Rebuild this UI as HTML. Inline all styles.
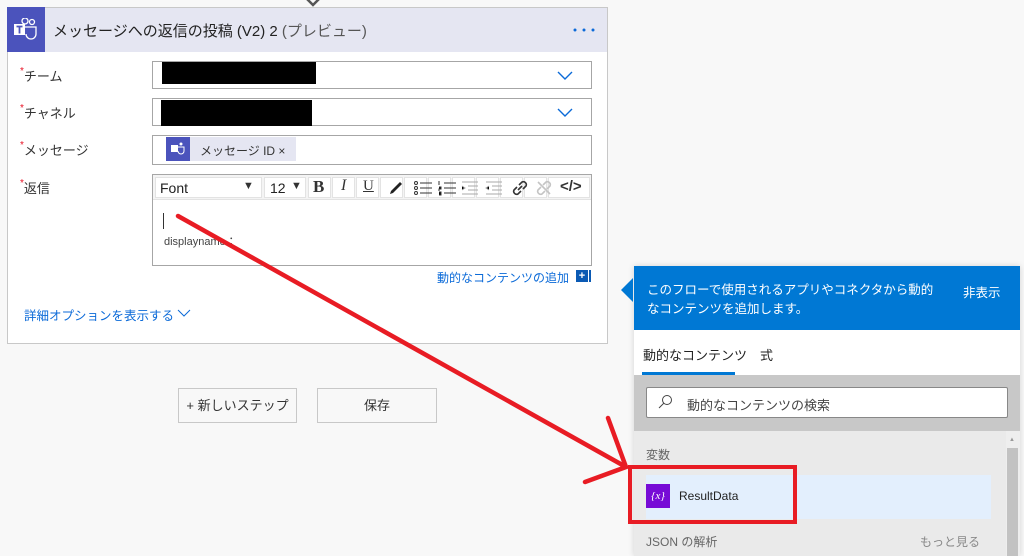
<!DOCTYPE html>
<html><head><meta charset="utf-8"><style>
*{box-sizing:border-box;margin:0;padding:0}
body{width:1024px;height:556px;overflow:hidden;background:#f8f8f8;font-family:"Liberation Sans","Noto Sans CJK JP",sans-serif;position:relative;color:#333}
.abs{position:absolute}
.card{left:7px;top:7px;width:601px;height:337px;background:#fff;border:1px solid #c8c8c8}
.hdr{left:7px;top:7px;width:601px;height:45px;background:#e5e6f2;border:1px solid #c8c8c8;border-bottom:none}
.lbl{font-size:13px;color:#333}
.lbl b{color:#e81123;font-weight:normal;font-size:10px;vertical-align:top}
.inp{border:1px solid #a6a6a6;background:#fff}
.blk{background:#000}
.tb{font-size:14px;color:#222}
.btn{position:absolute;top:177px;height:21px;border:1px solid #e3e3e3;background:#fff}
</style></head><body>
<svg class="abs" style="left:304px;top:0" width="18" height="8"><path d="M2 -2l7 7 7-7" fill="none" stroke="#555" stroke-width="2.5"/></svg>
<div class="abs card"></div>
<div class="abs hdr"></div>
<div class="abs" style="left:7px;top:7px;width:38px;height:45px;background:#4b53bc"></div>
<svg class="abs" style="left:12px;top:18px" width="28" height="24" viewBox="0 0 28 24"><circle cx="20" cy="4" r="2.5" fill="none" stroke="#fff" stroke-width="1.3"/><circle cx="13" cy="3" r="3" fill="none" stroke="#fff" stroke-width="1.3"/><path d="M10 9h14v7a5 5 0 0 1-10 0" fill="none" stroke="#fff" stroke-width="1.3"/><rect x="2" y="6" width="11" height="11" fill="#fff"/><path d="M4.5 8.5h6M7.5 8.5v7" stroke="#4b53bc" stroke-width="1.8"/></svg>
<div class="abs" style="left:53px;top:20px;font-size:15px;color:#222">メッセージへの返信の投稿 (V2) 2 <span style="color:#555">(プレビュー)</span></div>
<svg class="abs" style="left:572px;top:27px" width="24" height="6"><circle cx="3" cy="3" r="1.5" fill="#0b6ad8"/><circle cx="12" cy="3" r="1.5" fill="#0b6ad8"/><circle cx="21" cy="3" r="1.5" fill="#0b6ad8"/></svg>

<div class="abs lbl" style="left:20px;top:66px"><b>*</b>チーム</div>
<div class="abs inp" style="left:152px;top:61px;width:440px;height:28px"></div>
<div class="abs blk" style="left:162px;top:62px;width:154px;height:22px"></div>
<svg class="abs" style="left:557px;top:71px" width="16" height="10"><path d="M1 1l7 7 7-7" fill="none" stroke="#0b6ad8" stroke-width="1.4"/></svg>

<div class="abs lbl" style="left:20px;top:103px"><b>*</b>チャネル</div>
<div class="abs inp" style="left:152px;top:98px;width:440px;height:28px"></div>
<div class="abs blk" style="left:161px;top:100px;width:151px;height:26px"></div>
<svg class="abs" style="left:557px;top:108px" width="16" height="10"><path d="M1 1l7 7 7-7" fill="none" stroke="#0b6ad8" stroke-width="1.4"/></svg>

<div class="abs lbl" style="left:20px;top:140px"><b>*</b>メッセージ</div>
<div class="abs inp" style="left:152px;top:135px;width:440px;height:30px"></div>
<div class="abs" style="left:166px;top:137px;width:130px;height:24px;background:#e5e6f2"></div>
<div class="abs" style="left:166px;top:137px;width:24px;height:24px;background:#4b53bc"></div>
<svg class="abs" style="left:170px;top:142px" width="16" height="14"><rect x="1" y="3" width="7" height="7" fill="#fff"/><path d="M8 5h6v4a3 3 0 0 1-6 0" fill="none" stroke="#fff"/><circle cx="11" cy="2" r="1.5" fill="#fff"/></svg>
<div class="abs" style="left:200px;top:142px;font-size:12px;color:#333">メッセージ ID ×</div>

<div class="abs lbl" style="left:20px;top:178px"><b>*</b>返信</div>
<div class="abs inp" style="left:152px;top:174px;width:440px;height:92px"></div>
<div class="abs" style="left:153px;top:175px;width:438px;height:25px;background:#f4f4f4;border-bottom:1px solid #e3e3e3"></div>
<div class="btn" style="left:155px;width:107px"></div>
<div class="btn" style="left:264px;width:42px"></div>
<div class="btn" style="left:308px;width:23px"></div>
<div class="btn" style="left:332px;width:23px"></div>
<div class="btn" style="left:356px;width:23px"></div>
<div class="btn" style="left:380px;width:23px"></div>
<div class="btn" style="left:404px;width:23px"></div>
<div class="btn" style="left:428px;width:23px"></div>
<div class="btn" style="left:452px;width:23px"></div>
<div class="btn" style="left:476px;width:23px"></div>
<div class="btn" style="left:500px;width:23px"></div>
<div class="btn" style="left:524px;width:23px"></div>
<div class="btn" style="left:548px;width:42px"></div>
<div class="abs tb" style="left:160px;top:180px">Font</div>
<div class="abs" style="left:243px;top:180px;font-size:11px">▼</div>
<div class="abs tb" style="left:270px;top:180px">12</div>
<div class="abs" style="left:291px;top:180px;font-size:11px">▼</div>
<div class="abs" style="left:313px;top:177px;font:bold 17px 'Liberation Serif',serif">B</div>
<div class="abs" style="left:341px;top:177px;font:italic 16px 'Liberation Serif',serif">I</div>
<div class="abs" style="left:363px;top:178px;font:15px 'Liberation Serif',serif;text-decoration:underline">U</div>
<svg class="abs" style="left:388px;top:180px" width="16" height="16"><path d="M2 14l3-1 9-9-2-2-9 9z" fill="#222"/></svg>
<svg class="abs" style="left:413px;top:180px" width="20" height="16" stroke="#333"><path d="M7 3h12M7 8h12M7 13h12"/><circle cx="3" cy="3" r="1.5" fill="none"/><circle cx="3" cy="8" r="1.5" fill="none"/><circle cx="3" cy="13" r="1.5" fill="none"/></svg>
<svg class="abs" style="left:437px;top:180px" width="20" height="16" stroke="#333"><path d="M7 3h12M7 8h12M7 13h12M2 1v4M2 7h2v2H2v2M2 12h2v3H2"/></svg>
<svg class="abs" style="left:461px;top:180px" width="18" height="16" stroke="#aaa"><path d="M1 2h16M7 6h10M7 10h10M1 14h16M1 6l3 2-3 2"/></svg>
<svg class="abs" style="left:485px;top:180px" width="18" height="16" stroke="#aaa"><path d="M1 2h16M7 6h10M7 10h10M1 14h16M4 6l-3 2 3 2"/></svg>
<svg class="abs" style="left:511px;top:179px" width="18" height="18" fill="none" stroke="#333" stroke-width="1.6"><path d="M8 6l3-3a3 3 0 0 1 4 4l-3 3M10 12l-3 3a3 3 0 0 1-4-4l3-3M7 11l4-4"/></svg>
<svg class="abs" style="left:535px;top:179px" width="18" height="18" fill="none" stroke="#c4c4c4" stroke-width="1.6"><path d="M8 6l3-3a3 3 0 0 1 4 4l-3 3M10 12l-3 3a3 3 0 0 1-4-4l3-3M3 3l12 12"/></svg>
<div class="abs" style="left:560px;top:178px;font-size:15px;font-weight:bold">&lt;/&gt;</div>
<div class="abs" style="left:163px;top:213px;width:1px;height:16px;background:#333"></div>
<div class="abs" style="left:164px;top:233px;font-size:11px;color:#444">displayname：</div>
<div class="abs" style="left:437px;top:269px;font-size:12px;color:#0b6ad8">動的なコンテンツの追加</div>
<div class="abs" style="left:576px;top:270px;width:12px;height:12px;background:#0b5ab4;color:#fff;font-size:11px;line-height:12px;text-align:center;font-weight:bold">+</div>
<div class="abs" style="left:589px;top:270px;width:2px;height:12px;background:#0b5ab4"></div>
<div class="abs" style="left:24px;top:305px;font-size:12.5px;color:#0b6ad8">詳細オプションを表示する</div>
<svg class="abs" style="left:177px;top:309px" width="14" height="8"><path d="M1 1l6 6 6-6" fill="none" stroke="#0b6ad8"/></svg>

<div class="abs" style="left:178px;top:388px;width:119px;height:35px;border:1px solid #c8c8c8;font-size:13px;text-align:center;line-height:33px">+ 新しいステップ</div>
<div class="abs" style="left:317px;top:388px;width:120px;height:35px;border:1px solid #c8c8c8;font-size:13px;text-align:center;line-height:33px">保存</div>

<div class="abs" style="left:634px;top:266px;width:386px;height:290px;background:#fff;box-shadow:0 0 6px rgba(0,0,0,.15)"></div>
<div class="abs" style="left:621px;top:278px;width:0;height:0;border:12px solid transparent;border-right-color:#0078d4;border-left:none"></div>
<div class="abs" style="left:634px;top:266px;width:386px;height:64px;background:#0078d4"></div>
<div class="abs" style="left:647px;top:281px;font-size:12.5px;color:#fff;line-height:19px;width:310px">このフローで使用されるアプリやコネクタから動的<br>なコンテンツを追加します。</div>
<div class="abs" style="left:963px;top:282px;font-size:12.5px;color:#fff">非表示</div>
<div class="abs" style="left:643px;top:345px;font-size:13px;color:#222">動的なコンテンツ</div>
<div class="abs" style="left:760px;top:345px;font-size:13px;color:#222">式</div>
<div class="abs" style="left:642px;top:372px;width:93px;height:3px;background:#0078d4"></div>
<div class="abs" style="left:634px;top:375px;width:386px;height:56px;background:#c8c8c8"></div>
<div class="abs" style="left:646px;top:387px;width:362px;height:31px;background:#fff;border:1px solid #888;border-radius:2px"></div>
<svg class="abs" style="left:657px;top:394px" width="16" height="16"><circle cx="10" cy="6" r="4.5" fill="none" stroke="#444"/><path d="M7 9l-5 5" stroke="#444"/></svg>
<div class="abs" style="left:687px;top:395px;font-size:13px;color:#444">動的なコンテンツの検索</div>
<div class="abs" style="left:634px;top:431px;width:372px;height:125px;background:#eaeaea"></div>
<div class="abs" style="left:1006px;top:431px;width:14px;height:125px;background:#eee"></div>
<div class="abs" style="left:1007px;top:448px;width:11px;height:108px;background:#c2c2c2"></div>
<div class="abs" style="left:1009px;top:437px;font-size:6px;color:#999">▲</div>
<div class="abs" style="left:646px;top:446px;font-size:12px;color:#666">変数</div>
<div class="abs" style="left:646px;top:475px;width:345px;height:44px;background:#e3effd"></div>
<div class="abs" style="left:646px;top:484px;width:24px;height:24px;background:#770bd6;color:#fff;font:italic 11px 'Liberation Serif',serif;text-align:center;line-height:24px">{<i>x</i>}</div>
<div class="abs" style="left:679px;top:489px;font-size:12px;color:#222">ResultData</div>
<div class="abs" style="left:646px;top:533px;font-size:12px;color:#666">JSON の解析</div>
<div class="abs" style="left:920px;top:533px;font-size:12px;color:#888">もっと見る</div>

<svg class="abs" style="left:0;top:0" width="1024" height="556">
<g stroke="#e81c24" stroke-width="4.5" fill="none" stroke-linecap="round">
<path d="M178 216L626 467M608 418L626 467L585 482"/>
<rect x="630" y="467" width="165" height="55" stroke-width="4"/>
</g></svg>
</body></html>
